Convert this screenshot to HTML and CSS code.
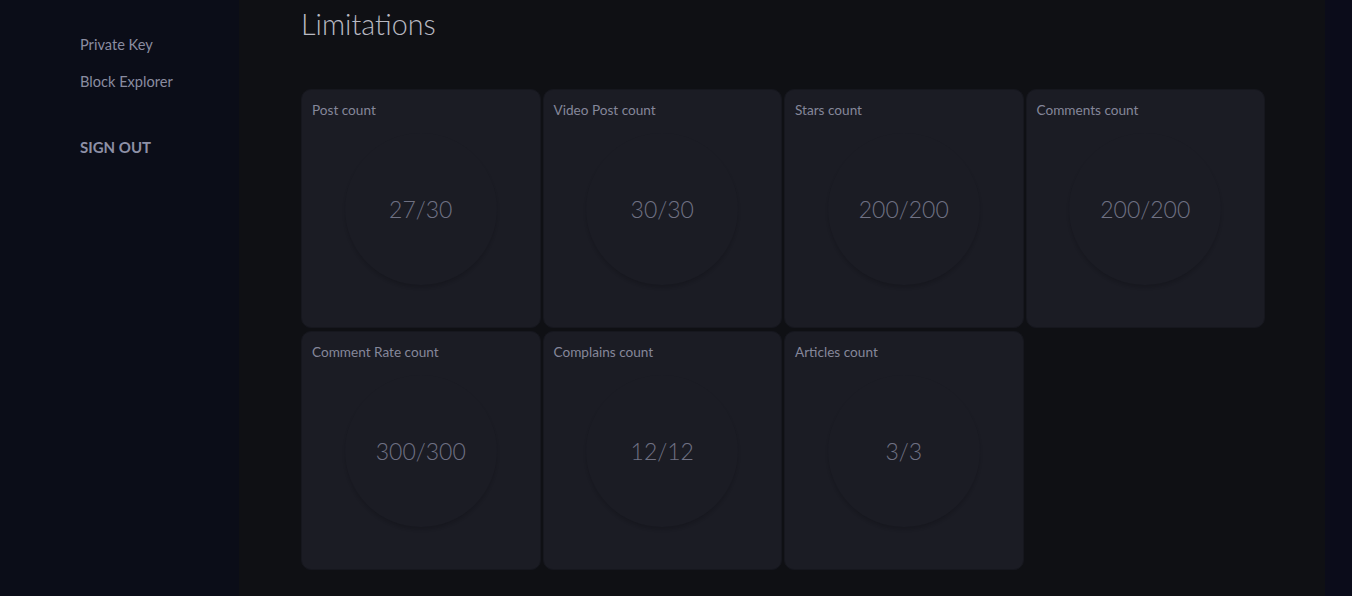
FILE: index.html
```html
<!DOCTYPE html>
<html lang="en">
  <head>
    <meta charset="UTF-8" />
    <meta name="viewport" content="width=device-width, initial-scale=1.0" />
    <link rel="stylesheet" href="styles.css">
    <title>Limitations</title>
  </head>
  <body>
    <div class="layout">
      <aside class="sidebar">
        <a class="nav-link" href="#">Private Key</a>
        <a class="nav-link" href="#">Block Explorer</a>
        <a class="sign-out" href="#">SIGN OUT</a>
      </aside>

      <main class="content">
        <h1 class="title">Limitations</h1>

        <div class="grid">
          <div class="card">
            <div class="card-label">Post count</div>
            <div class="gauge"><span>27/30</span></div>
          </div>
          <div class="card">
            <div class="card-label">Video Post count</div>
            <div class="gauge"><span>30/30</span></div>
          </div>
          <div class="card">
            <div class="card-label">Stars count</div>
            <div class="gauge"><span>200/200</span></div>
          </div>
          <div class="card">
            <div class="card-label">Comments count</div>
            <div class="gauge"><span>200/200</span></div>
          </div>
          <div class="card">
            <div class="card-label">Comment Rate count</div>
            <div class="gauge"><span>300/300</span></div>
          </div>
          <div class="card">
            <div class="card-label">Complains count</div>
            <div class="gauge"><span>12/12</span></div>
          </div>
          <div class="card">
            <div class="card-label">Articles count</div>
            <div class="gauge"><span>3/3</span></div>
          </div>
        </div>
      </main>

      <div class="edge"></div>
    </div>
  </body>
</html>
```

FILE: styles.css
```css
* {
  box-sizing: border-box;
}
body {
  margin: 0;
  font-family: Lato, "Open Sans", sans-serif;
  background-color: #0f1014;
}
.layout {
  display: flex;
  min-height: 596px;
}

/* left menu */
.sidebar {
  width: 239px;
  flex-shrink: 0;
  background-color: #0b0d18;
  display: flex;
  flex-direction: column;
  align-items: flex-start;
  padding: 35px 0 0 80px;
}
.nav-link {
  color: #8a8ca0;
  font-size: 14.6px;
  text-decoration: none;
  line-height: 20px;
  margin-bottom: 17px;
}
.sign-out {
  margin-top: 28px;
  color: #8e90a6;
  font-size: 15px;
  font-weight: 700;
  text-decoration: none;
  line-height: 20px;
}

/* main area */
.content {
  flex: 1;
  background-color: #0f1014;
  padding: 0 0 26px 62px;
}
.title {
  margin: 0;
  padding-top: 4px;
  font-weight: 300;
  font-size: 28.7px;
  line-height: 40px;
  color: #b8b9c2;
}
.grid {
  margin-top: 45px;
  display: grid;
  grid-template-columns: repeat(4, 239.5px);
  grid-auto-rows: 239px;
  column-gap: 2px;
  row-gap: 3px;
}
.card {
  background-color: #1b1c24;
  border: 1px solid #16171e;
  border-radius: 10px;
  display: flex;
  flex-direction: column;
}
.card-label {
  padding: 12px 0 0 10px;
  font-size: 13.6px;
  line-height: 16px;
  color: #85879a;
}
/* round gauge, only its soft lower edge shows */
.gauge {
  margin: 15px auto 0;
  width: 152px;
  height: 152px;
  border-radius: 50%;
  background-color: #1b1c24;
  box-shadow: 0 3px 3px rgba(12, 13, 18, 0.22);
  display: flex;
  align-items: center;
  justify-content: center;
}
.gauge span {
  font-size: 23px;
  font-weight: 300;
  color: #6f7183;
}

.edge {
  width: 27px;
  flex-shrink: 0;
  background-color: #0b0c1a;
}
```
